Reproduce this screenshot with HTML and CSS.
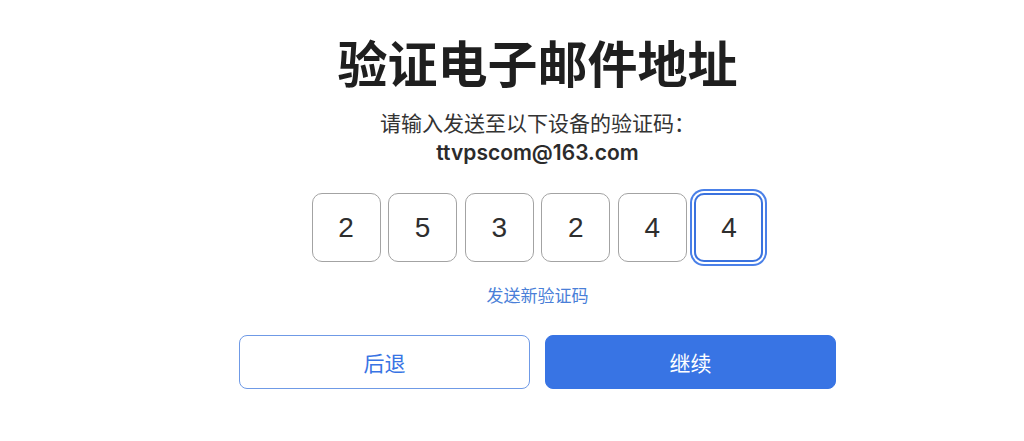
FILE: index.html
```html
<!DOCTYPE html>
<html lang="zh-CN">
<head>
<meta charset="UTF-8">
<meta name="viewport" content="width=device-width, initial-scale=1.0">
<title>验证电子邮件地址</title>
<link rel="stylesheet" href="styles.css">
</head>
<body>
<div class="verify">
    <h1 class="title">验证电子邮件地址</h1>
    <p class="subtitle">请输入发送至以下设备的验证码：</p>
    <p class="email">ttvpscom@163.com</p>

    <div class="code-row">
        <div class="code-box">2</div>
        <div class="code-box">5</div>
        <div class="code-box">3</div>
        <div class="code-box">2</div>
        <div class="code-box">4</div>
        <div class="code-box active">4</div>
    </div>

    <a href="#" class="resend">发送新验证码</a>

    <div class="actions">
        <button class="btn btn-back">后退</button>
        <button class="btn btn-next">继续</button>
    </div>
</div>
</body>
</html>
```

FILE: styles.css
```css
body {
    margin: 0;
    padding: 0 0 0 51px;
    background: #fff;
    color: #333;
    font-family: "Liberation Sans", "Noto Sans CJK SC", sans-serif;
}
.verify {
    display: flex;
    flex-direction: column;
    align-items: center;
    padding-top: 32px;
}
.title {
    margin: 0;
    font-family: "Noto Sans CJK SC", sans-serif;
    font-size: 50px;
    font-weight: 700;
    line-height: 58px;
    color: #1f1f1f;
}
.subtitle {
    margin: 17px 0 0;
    font-family: "Noto Sans CJK SC", sans-serif;
    font-size: 21px;
    line-height: 30px;
    color: #333;
}
.email {
    margin: 1px 0 0;
    font-family: Inter, "Liberation Sans", sans-serif;
    font-size: 21px;
    font-weight: 600;
    line-height: 30px;
    color: #2b2b2b;
}
.code-row {
    display: flex;
    gap: 7.6px;
    margin-top: 25px;
}
.code-box {
    width: 69px;
    height: 69px;
    box-sizing: border-box;
    border: 1px solid #a3a3a3;
    border-radius: 10px;
    display: flex;
    align-items: center;
    justify-content: center;
    font-size: 28px;
    color: #2e2e2e;
}
.code-box.active {
    border: 2px solid #3a72de;
    box-shadow: 0 0 0 2px #fff, 0 0 0 4px #4a80e8;
}
.resend {
    margin-top: 21px;
    font-family: "Noto Sans CJK SC", sans-serif;
    font-size: 17px;
    line-height: 24px;
    color: #4a7fd8;
    text-decoration: none;
}
.actions {
    display: flex;
    gap: 15px;
    margin-top: 28px;
}
.btn {
    width: 291px;
    height: 54px;
    border-radius: 8px;
    font-family: "Noto Sans CJK SC", sans-serif;
    font-size: 21px;
    cursor: pointer;
}
.btn-back {
    background: #fff;
    border: 1px solid #6f9ae6;
    color: #3874e4;
}
.btn-next {
    background: #3874e4;
    border: 1px solid #3874e4;
    color: #fff;
}
```
